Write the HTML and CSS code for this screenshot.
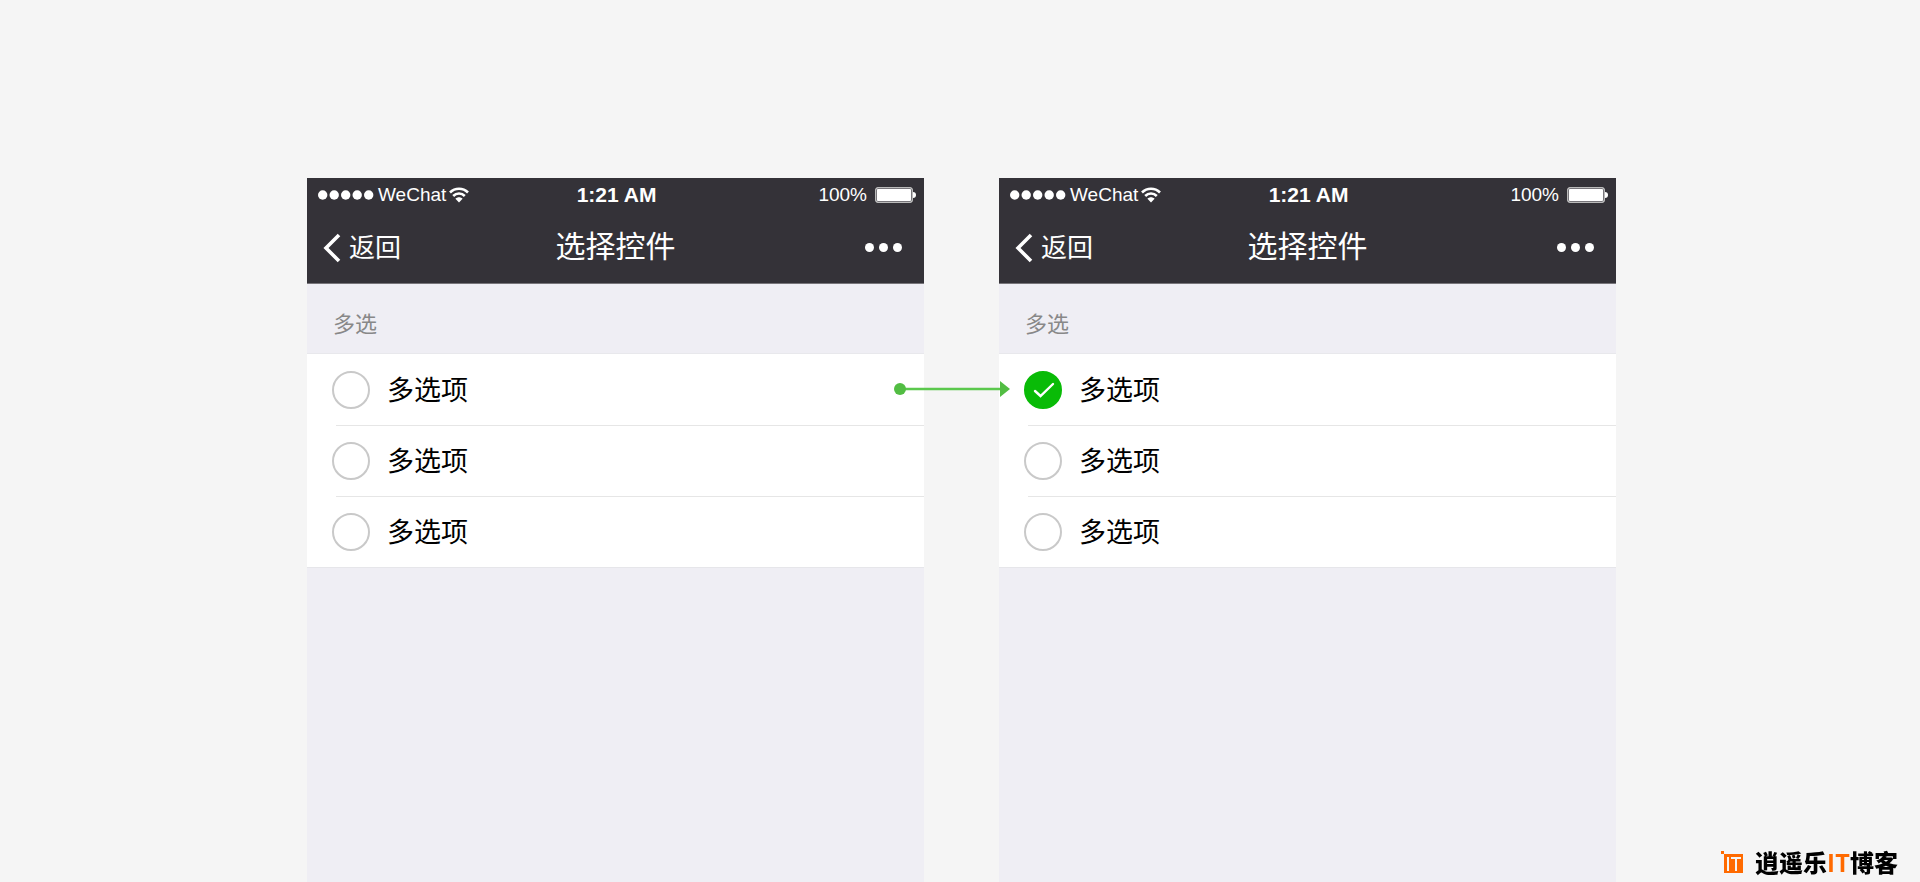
FILE: index.html
```html
<!DOCTYPE html>
<html lang="zh-CN">
<head>
    <meta charset="UTF-8">
    <meta name="viewport" content="width=device-width, initial-scale=1.0">
    <title>选择控件</title>
    <link rel="stylesheet" href="styles.css">
</head>
<body>
    <main class="stage">
        <section class="phone">
            <header class="header">
                <div class="status-bar">
                    <div class="carrier">
                        <svg class="signal" width="56" height="10" viewBox="0 0 56 10" fill="#fff">
                            <circle cx="4.7" cy="5" r="4.7"/>
                            <circle cx="16.2" cy="5" r="4.7"/>
                            <circle cx="27.7" cy="5" r="4.7"/>
                            <circle cx="39.2" cy="5" r="4.7"/>
                            <circle cx="50.7" cy="5" r="4.7"/>
                        </svg>
                        <span>WeChat</span>
                        <svg class="wifi" width="20" height="16" viewBox="0 0 20 16">
                            <path d="M1 5.5C6 0.5 14 0.5 19 5.5M4.2 9C7.5 5.7 12.5 5.7 15.8 9" fill="none" stroke="#fff" stroke-width="2.6"/>
                            <path d="M6.4 11.8C8.5 9.8 11.5 9.8 13.6 11.8L10 15.500Z" fill="#fff"/>
                        </svg>
                    </div>
                    <div class="time">1:21 AM</div>
                    <div class="power">
                        <span>100%</span>
                        <div class="battery"></div>
                    </div>
                </div>
                <nav class="nav-bar">
                    <a class="back" href="#">
                        <svg width="18" height="30" viewBox="0 0 18 30">
                            <path d="M16 2L3 15L16 28" fill="none" stroke="#fff" stroke-width="3.6"/>
                        </svg>
                        <span>返回</span>
                    </a>
                    <h1 class="title">选择控件</h1>
                    <button class="more" type="button" aria-label="更多"><i></i><i></i><i></i></button>
                </nav>
            </header>
            <h2 class="group-title">多选</h2>
            <div class="list">
                <label class="item">
                    <input type="checkbox">
                    <span>多选项</span>
                </label>
                <label class="item">
                    <input type="checkbox">
                    <span>多选项</span>
                </label>
                <label class="item">
                    <input type="checkbox">
                    <span>多选项</span>
                </label>
                <svg class="arrow" width="116" height="16" viewBox="0 0 116 16">
                    <path d="M6 8H107" stroke="#5bc84d" stroke-width="2.6"/>
                    <circle cx="6" cy="8" r="6" fill="#52bd43"/>
                    <path d="M106 0L116 8L106 16Z" fill="#52bd43"/>
                </svg>
            </div>
        </section>

        <section class="phone">
            <header class="header">
                <div class="status-bar">
                    <div class="carrier">
                        <svg class="signal" width="56" height="10" viewBox="0 0 56 10" fill="#fff">
                            <circle cx="4.7" cy="5" r="4.7"/>
                            <circle cx="16.2" cy="5" r="4.7"/>
                            <circle cx="27.7" cy="5" r="4.7"/>
                            <circle cx="39.2" cy="5" r="4.7"/>
                            <circle cx="50.7" cy="5" r="4.7"/>
                        </svg>
                        <span>WeChat</span>
                        <svg class="wifi" width="20" height="16" viewBox="0 0 20 16">
                            <path d="M1 5.5C6 0.5 14 0.5 19 5.5M4.2 9C7.5 5.7 12.5 5.7 15.8 9" fill="none" stroke="#fff" stroke-width="2.6"/>
                            <path d="M6.4 11.8C8.5 9.8 11.5 9.8 13.6 11.8L10 15.500Z" fill="#fff"/>
                        </svg>
                    </div>
                    <div class="time">1:21 AM</div>
                    <div class="power">
                        <span>100%</span>
                        <div class="battery"></div>
                    </div>
                </div>
                <nav class="nav-bar">
                    <a class="back" href="#">
                        <svg width="18" height="30" viewBox="0 0 18 30">
                            <path d="M16 2L3 15L16 28" fill="none" stroke="#fff" stroke-width="3.6"/>
                        </svg>
                        <span>返回</span>
                    </a>
                    <h1 class="title">选择控件</h1>
                    <button class="more" type="button" aria-label="更多"><i></i><i></i><i></i></button>
                </nav>
            </header>
            <h2 class="group-title">多选</h2>
            <div class="list">
                <label class="item">
                    <input type="checkbox" checked>
                    <svg class="tick" width="38" height="38" viewBox="0 0 38 38">
                        <path d="M11 20L16.500 25L29 13" fill="none" stroke="#fff" stroke-width="2.4" stroke-linecap="round"/>
                    </svg>
                    <span>多选项</span>
                </label>
                <label class="item">
                    <input type="checkbox">
                    <span>多选项</span>
                </label>
                <label class="item">
                    <input type="checkbox">
                    <span>多选项</span>
                </label>
            </div>
        </section>
    </main>

    <footer class="brand">
        <svg width="23" height="23" viewBox="0 0 23 23">
            <path d="M0 0H3V3H0ZM3 3H22V22H3Z" fill="#ff6a00"/>
            <path d="M7 6V20M10 7H20M15 7V20" fill="none" stroke="#f5f5f5" stroke-width="2"/>
        </svg>
        <div class="brand-name">逍遥乐<em>IT</em>博客</div>
    </footer>
</body>
</html>
```
FILE: styles.css
```css
* {
    box-sizing: border-box;
}
body {
    margin: 0;
    background-color: #f5f5f5;
    font-family: "Liberation Sans", "Noto Sans CJK SC", sans-serif;
    color: #000;
}
.stage {
    display: flex;
    gap: 75px;
    min-height: 100vh;
    padding: 178px 304px 0 307px;
}
.phone {
    flex: 1;
    background-color: #efeef4;
}

/* status bar + navigation */
.header {
    height: 106px;
    background-color: #343238;
    border-bottom: 1px solid #77757a;
    color: #fff;
}
.status-bar,
.nav-bar {
    display: grid;
    grid-template-columns: 1fr auto 1fr;
    align-items: center;
}
.status-bar {
    height: 34px;
    padding: 0 9px 0 11px;
    font-size: 19px;
}
.carrier,
.power,
.back,
.more {
    display: flex;
    align-items: center;
}
.signal {
    margin-right: 4px;
}
.wifi {
    margin-left: 3px;
}
.time {
    font-size: 21px;
    font-weight: bold;
}
.power {
    justify-content: flex-end;
}
.battery {
    position: relative;
    width: 38px;
    height: 16px;
    margin: 0 2px 0 8px;
    border: 1px solid #bbb;
    border-radius: 3px;
    background-color: #fff;
    box-shadow: inset 0 0 0 1px #77757a;
}
.battery::after {
    content: "";
    position: absolute;
    top: 4px;
    right: -4px;
    width: 3px;
    height: 6px;
    border-radius: 0 3px 3px 0;
    background-color: #fff;
}
.nav-bar {
    height: 71px;
    padding: 0 16px;
}
.back {
    gap: 8px;
    color: #fff;
    font-size: 26px;
    text-decoration: none;
}
.back span {
    padding-bottom: 4px;
}
.title {
    margin: 0;
    padding-bottom: 8px;
    font-size: 30px;
    font-weight: normal;
}
.more {
    justify-self: end;
    gap: 5px;
    padding: 0 6px;
    border: none;
    background: none;
}
.more i {
    width: 9px;
    height: 9px;
    border-radius: 50%;
    background-color: #fff;
}

/* option list */
.group-title {
    height: 70px;
    margin: 0;
    padding: 12px 26px 0;
    border-bottom: 1px solid #e8e8ec;
    color: #888;
    font-size: 22px;
    font-weight: normal;
    line-height: 58px;
}
.list {
    position: relative;
    background-color: #fff;
    border-bottom: 1px solid #e6e6ea;
}
.item {
    position: relative;
    display: flex;
    align-items: center;
    gap: 17px;
    height: 71px;
    padding-left: 25px;
    font-size: 27px;
}
.item span {
    padding-bottom: 2px;
}
.item + .item::before {
    content: "";
    position: absolute;
    top: 0;
    left: 29px;
    right: 0;
    border-top: 1px solid #e6e6e6;
}
.item input {
    appearance: none;
    width: 38px;
    height: 38px;
    margin: 0;
    border: 2px solid #c9c9c9;
    border-radius: 50%;
    background-color: #fff;
}
.item input:checked {
    border-color: #09bb07;
    background-color: #09bb07;
}
.tick {
    position: absolute;
    left: 25px;
}
.arrow {
    position: absolute;
    top: 27px;
    right: -86px;
    z-index: 1;
}

/* corner logo */
.brand {
    position: fixed;
    right: 22px;
    bottom: 8px;
    display: flex;
    align-items: center;
    gap: 11px;
}
.brand-name {
    font-family: "Noto Sans CJK SC", sans-serif;
    font-size: 24px;
    font-weight: 900;
    line-height: 24px;
}
.brand-name em {
    color: #ff6a00;
    font-style: normal;
    font-weight: 700;
}
```
